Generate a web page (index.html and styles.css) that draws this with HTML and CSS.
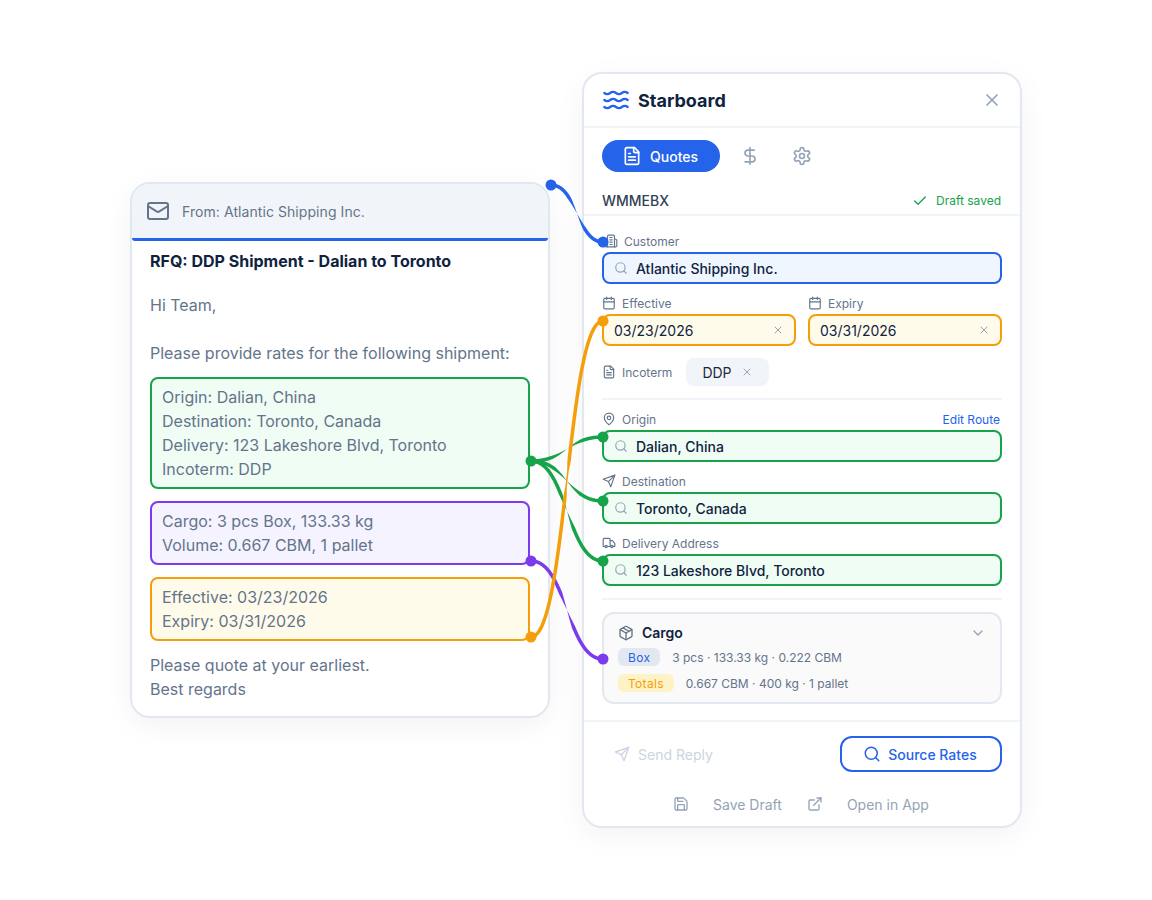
FILE: index.html
```html
<!DOCTYPE html>
<html lang="en">
<head>
<meta charset="utf-8">
<title>Starboard</title>
<link rel="stylesheet" href="styles.css">
</head>
<body>
<svg class="defs" aria-hidden="true">
  <symbol id="i-mail" viewBox="0 0 24 24"><rect x="2" y="4" width="20" height="16" rx="2"/><path d="m22 7-8.97 5.7a1.94 1.94 0 0 1-2.06 0L2 7"/></symbol>
  <symbol id="i-waves" viewBox="0 0 24 24"><path d="M2 6c.6.5 1.2 1 2.5 1C7 7 7 5 9.5 5c2.6 0 2.4 2 5 2 2.5 0 2.5-2 5-2 1.3 0 1.9.5 2.5 1"/><path d="M2 12c.6.5 1.2 1 2.5 1 2.5 0 2.5-2 5-2 2.6 0 2.4 2 5 2 2.5 0 2.5-2 5-2 1.3 0 1.9.5 2.5 1"/><path d="M2 18c.6.5 1.2 1 2.5 1 2.5 0 2.5-2 5-2 2.6 0 2.4 2 5 2 2.5 0 2.5-2 5-2 1.3 0 1.9.5 2.5 1"/></symbol>
  <symbol id="i-x" viewBox="0 0 24 24"><path d="M18 6 6 18"/><path d="m6 6 12 12"/></symbol>
  <symbol id="i-file" viewBox="0 0 24 24"><path d="M15 2H6a2 2 0 0 0-2 2v16a2 2 0 0 0 2 2h12a2 2 0 0 0 2-2V7Z"/><path d="M14 2v4a2 2 0 0 0 2 2h4"/><path d="M10 9H8"/><path d="M16 13H8"/><path d="M16 17H8"/></symbol>
  <symbol id="i-dollar" viewBox="0 0 24 24"><path d="M12 2v20"/><path d="M17 5H9.5a3.5 3.5 0 0 0 0 7h5a3.5 3.5 0 0 1 0 7H6"/></symbol>
  <symbol id="i-gear" viewBox="0 0 24 24"><path d="M12.22 2h-.44a2 2 0 0 0-2 2v.18a2 2 0 0 1-1 1.73l-.43.25a2 2 0 0 1-2 0l-.15-.08a2 2 0 0 0-2.73.73l-.22.38a2 2 0 0 0 .73 2.73l.15.1a2 2 0 0 1 1 1.72v.51a2 2 0 0 1-1 1.74l-.15.09a2 2 0 0 0-.73 2.73l.22.38a2 2 0 0 0 2.73.73l.15-.08a2 2 0 0 1 2 0l.43.25a2 2 0 0 1 1 1.73V20a2 2 0 0 0 2 2h.44a2 2 0 0 0 2-2v-.18a2 2 0 0 1 1-1.73l.43-.25a2 2 0 0 1 2 0l.15.08a2 2 0 0 0 2.73-.73l.22-.39a2 2 0 0 0-.73-2.73l-.15-.08a2 2 0 0 1-1-1.74v-.5a2 2 0 0 1 1-1.74l.15-.09a2 2 0 0 0 .73-2.73l-.22-.38a2 2 0 0 0-2.73-.73l-.15.08a2 2 0 0 1-2 0l-.43-.25a2 2 0 0 1-1-1.73V4a2 2 0 0 0-2-2z"/><circle cx="12" cy="12" r="3"/></symbol>
  <symbol id="i-check" viewBox="0 0 24 24"><path d="M20 6 9 17l-5-5"/></symbol>
  <symbol id="i-building" viewBox="0 0 24 24"><path d="M6 22V4a2 2 0 0 1 2-2h8a2 2 0 0 1 2 2v18Z"/><path d="M6 12H4a2 2 0 0 0-2 2v6a2 2 0 0 0 2 2h2"/><path d="M18 9h2a2 2 0 0 1 2 2v9a2 2 0 0 1-2 2h-2"/><path d="M10 6h4"/><path d="M10 10h4"/><path d="M10 14h4"/><path d="M10 18h4"/></symbol>
  <symbol id="i-search" viewBox="0 0 24 24"><circle cx="11" cy="11" r="8"/><path d="m21 21-4.3-4.3"/></symbol>
  <symbol id="i-cal" viewBox="0 0 24 24"><path d="M8 2v4"/><path d="M16 2v4"/><rect x="3" y="4" width="18" height="18" rx="2"/><path d="M3 10h18"/></symbol>
  <symbol id="i-pin" viewBox="0 0 24 24"><path d="M20 10c0 6-8 12-8 12s-8-6-8-12a8 8 0 0 1 16 0Z"/><circle cx="12" cy="10" r="3"/></symbol>
  <symbol id="i-send" viewBox="0 0 24 24"><path d="m22 2-7 20-4-9-9-4Z"/><path d="M22 2 11 13"/></symbol>
  <symbol id="i-truck" viewBox="0 0 24 24"><path d="M14 18V6a2 2 0 0 0-2-2H4a2 2 0 0 0-2 2v11a1 1 0 0 0 1 1h2"/><path d="M15 18H9"/><path d="M19 18h2a1 1 0 0 0 1-1v-3.65a1 1 0 0 0-.22-.624l-3.48-4.35A1 1 0 0 0 17.52 8H14"/><circle cx="17" cy="18" r="2"/><circle cx="7" cy="18" r="2"/></symbol>
  <symbol id="i-package" viewBox="0 0 24 24"><path d="m7.5 4.27 9 5.15"/><path d="M21 8a2 2 0 0 0-1-1.73l-7-4a2 2 0 0 0-2 0l-7 4A2 2 0 0 0 3 8v8a2 2 0 0 0 1 1.73l7 4a2 2 0 0 0 2 0l7-4A2 2 0 0 0 21 16Z"/><path d="m3.3 7 8.7 5 8.7-5"/><path d="M12 22V12"/></symbol>
  <symbol id="i-chevron" viewBox="0 0 24 24"><path d="m6 9 6 6 6-6"/></symbol>
  <symbol id="i-save" viewBox="0 0 24 24"><path d="M15.2 3a2 2 0 0 1 1.4.6l3.8 3.8a2 2 0 0 1 .6 1.4V19a2 2 0 0 1-2 2H5a2 2 0 0 1-2-2V5a2 2 0 0 1 2-2z"/><path d="M17 21v-7a1 1 0 0 0-1-1H8a1 1 0 0 0-1 1v7"/><path d="M7 3v4a1 1 0 0 0 1 1h7"/></symbol>
  <symbol id="i-external" viewBox="0 0 24 24"><path d="M15 3h6v6"/><path d="M10 14 21 3"/><path d="M18 13v6a2 2 0 0 1-2 2H5a2 2 0 0 1-2-2V8a2 2 0 0 1 2-2h6"/></symbol>
</svg>

<main class="stage">
  <article class="email">
    <header class="email-head">
      <svg class="icon i24"><use href="#i-mail"/></svg>
      <span>From: Atlantic Shipping Inc.</span>
    </header>
    <div class="email-body">
      <h2 class="subject">RFQ: DDP Shipment - Dalian to Toronto</h2>
      <p class="para">Hi Team,</p>
      <p class="para para-blank">Please provide rates for the following shipment:</p>
      <div class="hl hl-green">Origin: Dalian, China<br>Destination: Toronto, Canada<br>Delivery: 123 Lakeshore Blvd, Toronto<br>Incoterm: DDP</div>
      <div class="hl hl-purple">Cargo: 3 pcs Box, 133.33 kg<br>Volume: 0.667 CBM, 1 pallet</div>
      <div class="hl hl-amber">Effective: 03/23/2026<br>Expiry: 03/31/2026</div>
      <p class="para closing">Please quote at your earliest.<br>Best regards</p>
    </div>
  </article>

  <section class="panel">
    <header class="panel-head">
      <svg class="icon logo"><use href="#i-waves"/></svg>
      <span class="brand">Starboard</span>
      <svg class="icon i20 close"><use href="#i-x"/></svg>
    </header>
    <nav class="tabs">
      <span class="tab-active"><svg class="icon i20"><use href="#i-file"/></svg>Quotes</span>
      <span class="tab"><svg class="icon i20"><use href="#i-dollar"/></svg></span>
      <span class="tab"><svg class="icon i20"><use href="#i-gear"/></svg></span>
    </nav>
    <div class="ref-row">
      <span class="ref">WMMEBX</span>
      <span class="saved"><svg class="icon i16"><use href="#i-check"/></svg>Draft saved</span>
    </div>
    <div class="form">
      <label class="label label-customer"><svg class="icon i14"><use href="#i-building"/></svg>Customer</label>
      <div class="field f-blue"><svg class="icon i14 muted"><use href="#i-search"/></svg>Atlantic Shipping Inc.</div>

      <div class="dates">
        <div class="date-col">
          <label class="label"><svg class="icon i14"><use href="#i-cal"/></svg>Effective</label>
          <div class="field f-amber"><span class="grow">03/23/2026</span><svg class="icon i12 muted"><use href="#i-x"/></svg></div>
        </div>
        <div class="date-col">
          <label class="label"><svg class="icon i14"><use href="#i-cal"/></svg>Expiry</label>
          <div class="field f-amber"><span class="grow">03/31/2026</span><svg class="icon i12 muted"><use href="#i-x"/></svg></div>
        </div>
      </div>

      <div class="inco">
        <label class="label label-flat"><svg class="icon i14"><use href="#i-file"/></svg>Incoterm</label>
        <span class="inco-chip">DDP<svg class="icon i12 muted"><use href="#i-x"/></svg></span>
      </div>

      <hr class="rule">

      <div class="label-row">
        <label class="label"><svg class="icon i14"><use href="#i-pin"/></svg>Origin</label>
        <a class="edit">Edit Route</a>
      </div>
      <div class="field f-green"><svg class="icon i14 muted"><use href="#i-search"/></svg>Dalian, China</div>

      <label class="label label-next"><svg class="icon i14"><use href="#i-send"/></svg>Destination</label>
      <div class="field f-green"><svg class="icon i14 muted"><use href="#i-search"/></svg>Toronto, Canada</div>

      <label class="label label-next"><svg class="icon i14"><use href="#i-truck"/></svg>Delivery Address</label>
      <div class="field f-green"><svg class="icon i14 muted"><use href="#i-search"/></svg>123 Lakeshore Blvd, Toronto</div>

      <hr class="rule">

      <div class="cargo">
        <div class="cargo-head">
          <svg class="icon i16"><use href="#i-package"/></svg>
          <span class="cargo-title">Cargo</span>
          <svg class="icon i16 chev"><use href="#i-chevron"/></svg>
        </div>
        <div class="cargo-row"><span class="chip chip-box">Box</span>3 pcs · 133.33 kg · 0.222 CBM</div>
        <div class="cargo-row"><span class="chip chip-total">Totals</span>0.667 CBM · 400 kg · 1 pallet</div>
      </div>
    </div>
    <footer class="foot">
      <div class="foot-main">
        <span class="send"><svg class="icon i16"><use href="#i-send"/></svg>Send Reply</span>
        <span class="source"><svg class="icon i18"><use href="#i-search"/></svg>Source Rates</span>
      </div>
      <div class="foot-links">
        <svg class="icon i16"><use href="#i-save"/></svg><span class="foot-first">Save Draft</span>
        <svg class="icon i16"><use href="#i-external"/></svg><span>Open in App</span>
      </div>
    </footer>
  </section>

  <svg class="wires" viewBox="0 0 1152 900" aria-hidden="true">
    <path class="w-green" data-wire="531 461 603 437"/>
    <path class="w-green" data-wire="531 461 603 501"/>
    <path class="w-green" data-wire="531 461 603 561"/>
    <path class="w-purple" data-wire="531 561 603 659"/>
    <path class="w-amber" data-wire="531 637 603 321" data-floor="1.6"/>
    <path class="w-blue" data-wire="551 185 603 242"/>
    <circle class="w-green" cx="531" cy="461" r="5.5"/>
    <circle class="w-green" cx="603" cy="437" r="5.5"/>
    <circle class="w-green" cx="603" cy="501" r="5.5"/>
    <circle class="w-green" cx="603" cy="561" r="5.5"/>
    <circle class="w-purple" cx="531" cy="561" r="5.5"/>
    <circle class="w-purple" cx="603" cy="659" r="5.5"/>
    <circle class="w-amber" cx="531" cy="637" r="5.5"/>
    <circle class="w-amber" cx="603" cy="321" r="5.5"/>
    <circle class="w-blue" cx="551" cy="185" r="5.5"/>
    <circle class="w-blue" cx="603" cy="242" r="5.5"/>
  </svg>
</main>
<script src="connectors.js"></script>
</body>
</html>
```
FILE: styles.css
```css
* { box-sizing: border-box; }
html, body { margin: 0; padding: 0; background: #fff; }
body { font-family: "Inter", "Liberation Sans", sans-serif; color: #64748b; }
.defs { position: absolute; width: 0; height: 0; }

.icon { fill: none; stroke: currentColor; stroke-width: 2; stroke-linecap: round; stroke-linejoin: round; flex: none; display: block; }
.i12 { width: 12px; height: 12px; }
.i14 { width: 14px; height: 14px; }
.i16 { width: 16px; height: 16px; }
.i18 { width: 18px; height: 18px; }
.i20 { width: 20px; height: 20px; }
.i24 { width: 24px; height: 24px; }
.muted { color: #94a3b8; }

.stage { position: relative; width: 1152px; height: 900px; display: flex; align-items: center; justify-content: center; gap: 32px; }

/* Email */
.email { width: 420px; background: #fff; border: 2px solid #e2e8f0; border-radius: 20px; box-shadow: 0 8px 30px rgba(15, 23, 42, .05); }
.email-head { height: 57px; display: flex; align-items: center; gap: 12px; padding: 0 14px; background: #f1f5f9; border-bottom: 3px solid #2563eb; border-radius: 18px 18px 3px 3px; font-size: 14px; letter-spacing: .07px; }
.email-body { padding: 8px 18px 15px; font-size: 16px; line-height: 24px; }
.subject { margin: 0; font-size: 16px; line-height: 24px; font-weight: 700; color: #0f2340; }
.para { margin: 20px 0 0; }
.para-blank { margin-top: 24px; }
.closing { margin-top: 12px; }
.hl { margin-top: 12px; padding: 6px 10px; border: 2px solid; border-radius: 8px; }
.hl-green { border-color: #16a34a; background: #f0fdf4; }
.hl-purple { border-color: #7c3aed; background: #f5f3ff; }
.hl-amber { border-color: #f59e0b; background: #fffbeb; }

/* Panel */
.panel { width: 440px; height: 756px; background: #fff; border: 2px solid #e2e8f0; border-radius: 20px; box-shadow: 0 8px 30px rgba(15, 23, 42, .05); display: flex; flex-direction: column; }
.panel-head { height: 54px; display: flex; align-items: center; padding: 0 18px; border-bottom: 2px solid #f1f5f9; }
.logo { width: 28px; height: 28px; color: #2563eb; stroke-width: 2; }
.brand { margin-left: 8px; font-size: 18px; font-weight: 700; color: #0f2340; }
.close { margin-left: auto; color: #94a3b8; }

.tabs { display: flex; align-items: center; gap: 8px; padding: 12px 18px 0; }
.tab-active { height: 32px; display: flex; align-items: center; gap: 8px; padding: 0 22px 0 20px; border-radius: 16px; background: #2563eb; color: #fff; font-size: 14px; font-weight: 500; }
.tab { width: 44px; height: 32px; display: flex; align-items: center; justify-content: center; color: #94a3b8; }

.ref-row { height: 44px; padding: 15px 19px 0 18px; display: flex; align-items: center; justify-content: space-between; border-bottom: 2px solid #f1f5f9; }
.ref { font-size: 14px; font-weight: 500; color: #334155; }
.saved { display: flex; align-items: center; gap: 8px; font-size: 12px; color: #16a34a; }

.form { padding: 18px 18px 16px; display: flex; flex-direction: column; }
.label { height: 14px; margin-bottom: 4px; display: flex; align-items: center; gap: 6px; font-size: 12px; color: #64748b; }
.label-customer { padding-left: 2px; }
.label-next { margin-top: 12px; }
.label-flat { margin-bottom: 0; gap: 6px; }
.field { height: 32px; display: flex; align-items: center; gap: 8px; padding: 0 10px; border: 2px solid; border-radius: 8px; font-size: 14px; font-weight: 500; color: #0f2340; }
.f-blue { border-color: #2563eb; background: #eff6ff; }
.f-amber { border-color: #f59e0b; background: #fffbeb; font-weight: 400; }
.f-green { border-color: #16a34a; background: #f0fdf4; }
.grow { flex: 1; }

.dates { display: flex; gap: 12px; margin-top: 12px; }
.date-col { flex: 1; min-width: 0; }

.inco { display: flex; align-items: center; gap: 14px; margin-top: 12px; }
.inco-chip { height: 28px; display: flex; align-items: center; gap: 9px; padding: 0 16px; border-radius: 8px; background: #f1f5f9; font-size: 14px; font-weight: 400; color: #1e293b; }

.rule { width: 100%; height: 2px; margin: 12px 0; border: 0; background: #f1f5f9; }
.label-row { display: flex; justify-content: space-between; }
.edit { font-size: 12px; line-height: 16px; color: #2563eb; padding-right: 2px; }

.cargo { padding: 10px 14px; border: 2px solid #e2e8f0; border-radius: 12px; background: #fafafa; }
.cargo-head { height: 17px; display: flex; align-items: center; gap: 8px; }
.cargo-title { font-size: 14px; font-weight: 600; color: #0f2340; }
.chev { margin-left: auto; color: #94a3b8; }
.cargo-row { height: 18px; margin-top: 8px; display: flex; align-items: center; gap: 12px; font-size: 12px; color: #64748b; }
.cargo-head + .cargo-row { margin-top: 7px; }
.chip { height: 18px; display: flex; align-items: center; padding: 0 10px; border-radius: 6px; letter-spacing: .3px; }
.chip-box { background: #e2e8f0; color: #2563eb; }
.chip-total { background: #fef3c7; color: #f59e0b; }

.foot { flex: 1; border-top: 2px solid #f1f5f9; padding: 14px 18px 0; }
.foot-main { display: flex; align-items: center; justify-content: space-between; }
.send { display: flex; align-items: center; gap: 8px; padding-left: 12px; font-size: 14px; color: #cbd5e1; }
.source { width: 162px; height: 36px; display: flex; align-items: center; justify-content: center; gap: 7px; padding-right: 2px; border: 2px solid #2563eb; border-radius: 12px; font-size: 14px; font-weight: 500; color: #2563eb; }
.foot-links { display: flex; align-items: center; justify-content: center; gap: 24px; margin-top: 22px; padding-right: 2px; height: 20px; font-size: 14px; color: #94a3b8; }
.foot-first { margin-right: 1px; }

/* Connectors */
.wires { position: absolute; left: 0; top: 0; width: 1152px; height: 900px; pointer-events: none; }
.w-green { fill: #16a34a; }
.w-purple { fill: #7c3aed; }
.w-amber { fill: #f59e0b; }
.w-blue { fill: #2563eb; }
```
FILE: connectors.js
```js
// Each wire is a cubic bezier between two dots, drawn as a ribbon that pinches at its midpoint.
document.querySelectorAll('[data-wire]').forEach(function (el) {
  var p = el.dataset.wire.split(' ').map(Number);
  var x0 = p[0], y0 = p[1], x1 = p[2], y1 = p[3];
  var floor = Number(el.dataset.floor || 0);
  var mx = (x0 + x1) / 2, my = (y0 + y1) / 2, STEPS = 120, FULL = 3.5, TAPER = 18;
  var left = [], right = [];
  for (var i = 0; i <= STEPS; i++) {
    var t = i / STEPS, u = 1 - t;
    var x = u*u*u*x0 + 3*u*u*t*mx + 3*u*t*t*mx + t*t*t*x1;
    var y = u*u*u*y0 + 3*u*u*t*y0 + 3*u*t*t*y1 + t*t*t*y1;
    var dx = 3*u*u*(mx-x0) + 3*t*t*(x1-mx);
    var dy = 6*u*t*(y1-y0);
    var len = Math.hypot(dx, dy) || 1;
    var w = Math.max(floor, FULL * Math.min(1, Math.hypot(x - mx, y - my) / TAPER)) / 2;
    left.push((x - dy/len*w).toFixed(2) + ' ' + (y + dx/len*w).toFixed(2));
    right.unshift((x + dy/len*w).toFixed(2) + ' ' + (y - dx/len*w).toFixed(2));
  }
  el.setAttribute('d', 'M' + left.concat(right).join('L') + 'Z');
});
```
